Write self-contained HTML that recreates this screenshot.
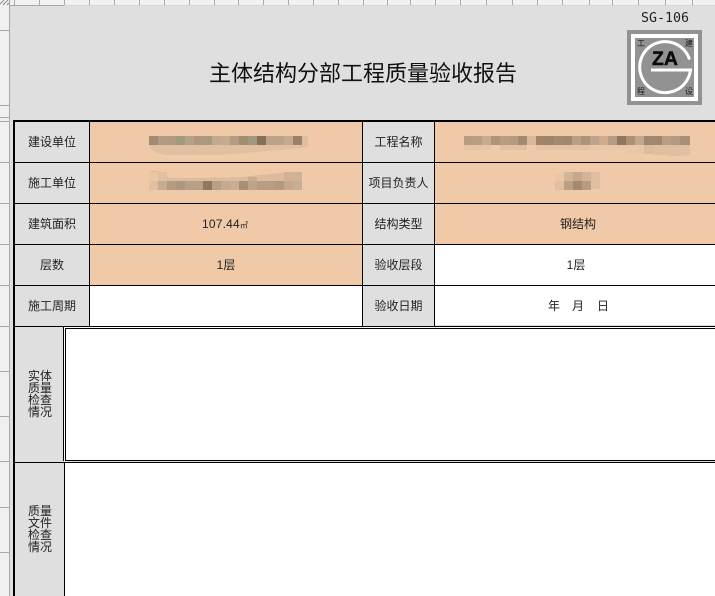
<!DOCTYPE html>
<html lang="zh-CN">
<head>
<meta charset="utf-8">
<title>主体结构分部工程质量验收报告</title>
<style>
html,body{margin:0;padding:0;background:#dfdfdf}
#p{position:relative;width:715px;height:596px;overflow:hidden;background:#dfdfdf;font-family:"Liberation Sans","Noto Sans CJK SC",sans-serif;color:#222}
#p div{position:absolute}
.t{font-size:12px;line-height:16px;text-align:center;white-space:nowrap}
.v{font-size:12px;line-height:12px;width:24px;text-align:center;left:28px}
.c{font-size:8px;line-height:10px;color:#1a1a1a}
svg{position:absolute;left:0;top:0}
</style>
</head>
<body>
<div id="p">
<svg width="715" height="596" viewBox="0 0 715 596" shape-rendering="crispEdges">
<!-- rulers -->
<rect x="0" y="0" width="715" height="5" fill="#f1f1f1"/>
<rect x="0" y="0" width="9" height="596" fill="#f0f0f0"/>
<rect x="9" y="0" width="1" height="596" fill="#a8a8a8"/>
<rect x="9" y="5" width="55" height="1" fill="#a8a8a8"/>
<rect x="64" y="5" width="651" height="1" fill="#d6d6d6"/>
<g fill="#a8a8a8">
<rect x="14" y="0" width="1" height="5"/><rect x="39" y="0" width="1" height="5"/><rect x="64" y="0" width="1" height="5"/><rect x="89" y="0" width="1" height="5"/><rect x="114" y="0" width="1" height="5"/><rect x="139" y="0" width="1" height="5"/><rect x="164" y="0" width="1" height="5"/><rect x="189" y="0" width="1" height="5"/><rect x="214" y="0" width="1" height="5"/><rect x="238" y="0" width="1" height="5"/><rect x="263" y="0" width="1" height="5"/><rect x="288" y="0" width="1" height="5"/><rect x="313" y="0" width="1" height="5"/><rect x="338" y="0" width="1" height="5"/><rect x="363" y="0" width="1" height="5"/><rect x="387" y="0" width="1" height="5"/><rect x="410" y="0" width="1" height="5"/><rect x="435" y="0" width="1" height="5"/><rect x="460" y="0" width="1" height="5"/><rect x="486" y="0" width="1" height="5"/><rect x="512" y="0" width="1" height="5"/><rect x="537" y="0" width="1" height="5"/><rect x="562" y="0" width="1" height="5"/><rect x="589" y="0" width="1" height="5"/><rect x="612" y="0" width="1" height="5"/><rect x="638" y="0" width="1" height="5"/><rect x="665" y="0" width="1" height="5"/><rect x="692" y="0" width="1" height="5"/>
<rect x="0" y="30" width="9" height="1"/><rect x="0" y="105" width="9" height="1"/><rect x="0" y="117" width="9" height="1"/><rect x="0" y="121" width="9" height="1"/><rect x="0" y="162" width="9" height="1"/><rect x="0" y="203" width="9" height="1"/><rect x="0" y="244" width="9" height="1"/><rect x="0" y="285" width="9" height="1"/><rect x="0" y="326" width="9" height="1"/><rect x="0" y="371" width="9" height="1"/><rect x="0" y="416" width="9" height="1"/><rect x="0" y="461" width="9" height="1"/><rect x="0" y="507" width="9" height="1"/><rect x="0" y="552" width="9" height="1"/>
</g>
<path d="M0 4l4-4M3 5l5-5M7 5l2-2" stroke="#8a8a8a" fill="none" shape-rendering="auto"/>

<!-- peach / white fills -->
<g fill="#f0caa8">
<rect x="90" y="122" width="272" height="122"/>
<rect x="90" y="245" width="272" height="40"/>
<rect x="435" y="122" width="280" height="122"/>
</g>
<g fill="#fff">
<rect x="435" y="245" width="280" height="80"/>
<rect x="90" y="286" width="272" height="40"/>
<rect x="64" y="327" width="651" height="134"/>
<rect x="64" y="462" width="651" height="134"/>
</g>

<!-- grid -->
<g fill="#000">
<rect x="13" y="120" width="702" height="2"/>
<rect x="13" y="120" width="2" height="476"/>
<rect x="15" y="162" width="700" height="1"/>
<rect x="15" y="203" width="700" height="1"/>
<rect x="15" y="244" width="700" height="1"/>
<rect x="15" y="285" width="700" height="1"/>
<rect x="15" y="326" width="700" height="1"/>
<rect x="89" y="122" width="1" height="204"/>
<rect x="362" y="122" width="1" height="204"/>
<rect x="434" y="122" width="1" height="204"/>
<rect x="63" y="326" width="1" height="135"/>
<rect x="65" y="328" width="650" height="1"/>
<rect x="65" y="328" width="1" height="133"/>
<rect x="65" y="460" width="650" height="1"/>
<rect x="15" y="462" width="700" height="1"/>
<rect x="64" y="462" width="1" height="134"/>
</g>

<!-- mosaic 1 -->
<path d="M149 145H310L305 148Q260 152 220 155H165Q150 152 149 145Z" fill="#e0c0a0"/>
<g>
<rect x="149" y="136" width="9" height="9" fill="#a48a70"/><rect x="158" y="136" width="9" height="9" fill="#b39c86"/><rect x="167" y="136" width="9" height="9" fill="#b09a80"/><rect x="176" y="136" width="9" height="9" fill="#a09a80"/><rect x="185" y="136" width="9" height="9" fill="#b89f88"/><rect x="194" y="136" width="9" height="9" fill="#b0977c"/><rect x="203" y="136" width="9" height="9" fill="#a89980"/><rect x="212" y="136" width="9" height="9" fill="#c2aa90"/><rect x="221" y="136" width="9" height="9" fill="#c8aa8c"/><rect x="230" y="136" width="9" height="9" fill="#b49c84"/><rect x="239" y="136" width="9" height="9" fill="#a48c72"/><rect x="248" y="136" width="9" height="9" fill="#a09880"/><rect x="257" y="136" width="9" height="9" fill="#86705c"/><rect x="266" y="136" width="9" height="9" fill="#bca288"/><rect x="275" y="136" width="9" height="9" fill="#bca288"/><rect x="284" y="136" width="9" height="9" fill="#c4aa90"/><rect x="293" y="136" width="9" height="9" fill="#9c8068"/><rect x="302" y="136" width="6" height="9" fill="#dcbfa3"/>
</g>
<!-- mosaic 2 -->
<path d="M149 181V172Q152 170 160 172L170 178H200L240 177L290 172H302V181Z" fill="#dcbc9c"/>
<g>
<rect x="149" y="172" width="9" height="9" fill="#ebc6a5"/><rect x="158" y="172" width="9" height="9" fill="#e0c0a0"/><rect x="248" y="177" width="9" height="4" fill="#c8aa8c"/><rect x="284" y="172" width="18" height="9" fill="#d2b294"/>
<rect x="149" y="181" width="9" height="9" fill="#e0c0a0"/><rect x="158" y="181" width="9" height="9" fill="#c4ac92"/><rect x="167" y="181" width="9" height="9" fill="#b49a80"/><rect x="176" y="181" width="9" height="9" fill="#ac9880"/><rect x="185" y="181" width="9" height="9" fill="#b8a088"/><rect x="194" y="181" width="9" height="9" fill="#b8a088"/><rect x="203" y="181" width="9" height="9" fill="#907860"/><rect x="212" y="181" width="9" height="9" fill="#b8a088"/><rect x="221" y="181" width="9" height="9" fill="#c4aa90"/><rect x="230" y="181" width="9" height="9" fill="#c8ae94"/><rect x="239" y="181" width="9" height="9" fill="#a89078"/><rect x="248" y="181" width="9" height="9" fill="#c0a288"/><rect x="257" y="181" width="9" height="9" fill="#b89c84"/><rect x="266" y="181" width="9" height="9" fill="#b89c84"/><rect x="275" y="181" width="9" height="9" fill="#b49880"/><rect x="284" y="181" width="9" height="9" fill="#c4a88e"/><rect x="293" y="181" width="9" height="9" fill="#c8ae94"/>
</g>
<!-- mosaic 3 -->
<path d="M630 150H690V155Q670 157 665 155L640 153Z" fill="#e0bea0"/>
<g>
<rect x="464" y="136" width="9" height="9" fill="#b89c80"/><rect x="473" y="136" width="9" height="9" fill="#b89e84"/><rect x="482" y="136" width="9" height="9" fill="#c8ac90"/><rect x="491" y="136" width="9" height="9" fill="#b09478"/><rect x="500" y="136" width="9" height="9" fill="#bc9c80"/><rect x="509" y="136" width="9" height="9" fill="#b49a80"/><rect x="518" y="136" width="9" height="9" fill="#a08a70"/><rect x="527" y="136" width="9" height="9" fill="#dcb898"/><rect x="536" y="136" width="9" height="9" fill="#a48468"/><rect x="545" y="136" width="9" height="9" fill="#9c8468"/><rect x="554" y="136" width="9" height="9" fill="#a08a70"/><rect x="563" y="136" width="9" height="9" fill="#a08870"/><rect x="572" y="136" width="9" height="9" fill="#bc9e80"/><rect x="581" y="136" width="9" height="9" fill="#a89478"/><rect x="590" y="136" width="9" height="9" fill="#bca48c"/><rect x="599" y="136" width="9" height="9" fill="#d0ac8c"/><rect x="608" y="136" width="9" height="9" fill="#b49c84"/><rect x="617" y="136" width="9" height="9" fill="#907860"/><rect x="626" y="136" width="9" height="9" fill="#b09074"/><rect x="635" y="136" width="9" height="9" fill="#c0a88c"/><rect x="644" y="136" width="9" height="9" fill="#a08870"/><rect x="653" y="136" width="9" height="9" fill="#a08870"/><rect x="662" y="136" width="9" height="9" fill="#bc9e84"/><rect x="671" y="136" width="9" height="9" fill="#b49a80"/><rect x="680" y="136" width="10" height="9" fill="#a89078"/>
<rect x="464" y="145" width="27" height="5" fill="#e4c4a4"/><rect x="500" y="145" width="27" height="5" fill="#e0c0a0"/><rect x="536" y="145" width="54" height="5" fill="#e4c2a2"/><rect x="590" y="145" width="36" height="5" fill="#e8c6a6"/><rect x="626" y="145" width="18" height="9" fill="#e8c6a6"/><rect x="644" y="145" width="9" height="9" fill="#dcbc9c"/><rect x="653" y="145" width="27" height="10" fill="#e0bea0"/><rect x="680" y="145" width="10" height="9" fill="#e0c0a0"/>
</g>
<!-- mosaic 4 -->
<g>
<rect x="555" y="174" width="9" height="7" fill="#ebc6a5"/><rect x="564" y="172" width="9" height="9" fill="#d4b496"/><rect x="573" y="172" width="9" height="9" fill="#c8a88a"/><rect x="582" y="172" width="9" height="9" fill="#d4b496"/><rect x="591" y="172" width="9" height="9" fill="#dfbfa0"/>
<rect x="555" y="181" width="9" height="9" fill="#e0c0a0"/><rect x="564" y="181" width="9" height="9" fill="#bca084"/><rect x="573" y="181" width="9" height="9" fill="#a48a70"/><rect x="582" y="181" width="9" height="9" fill="#b89c80"/><rect x="591" y="181" width="9" height="8" fill="#dfbfa0"/>
</g>

<!-- logo -->
<rect x="627" y="30" width="75" height="75" fill="#929292"/>
<rect x="631" y="34" width="67" height="67" fill="#fff"/>
<rect x="635" y="38" width="59" height="59" fill="#929292"/>
<g shape-rendering="auto" fill="none" stroke="#fff" stroke-width="3">
<path d="M689.5 59.5A25.5 25.5 0 1 0 690.5 70H651"/>
</g>
</svg>

<div class="t" style="left:641px;top:11px;width:48px;font-family:'DejaVu Sans Mono',monospace;font-size:13.3px;color:#222">SG-106</div>
<div style="left:650px;top:48px;width:30px;text-align:center;font:bold 19.5px/22px 'Liberation Sans',sans-serif;color:#0a0a0a;-webkit-text-stroke:.4px #0a0a0a">ZA</div>
<div class="c" style="left:637px;top:39px">工</div>
<div class="c" style="left:685px;top:39px">建</div>
<div class="c" style="left:637px;top:87px">程</div>
<div class="c" style="left:685px;top:87px">设</div>

<div style="left:209px;top:59px;width:310px;font-size:22px;line-height:30px;white-space:nowrap;color:#111">主体结构分部工程质量验收报告</div>

<div class="t" style="left:15px;top:134px;width:74px">建设单位</div>
<div class="t" style="left:15px;top:175px;width:74px">施工单位</div>
<div class="t" style="left:15px;top:216px;width:74px">建筑面积</div>
<div class="t" style="left:15px;top:257px;width:74px">层数</div>
<div class="t" style="left:15px;top:298px;width:74px">施工周期</div>

<div class="t" style="left:363px;top:134px;width:71px">工程名称</div>
<div class="t" style="left:363px;top:175px;width:71px">项目负责人</div>
<div class="t" style="left:363px;top:216px;width:71px">结构类型</div>
<div class="t" style="left:363px;top:257px;width:71px">验收层段</div>
<div class="t" style="left:363px;top:298px;width:71px">验收日期</div>

<div class="t" style="left:202px;top:216px;width:50px;text-align:left;letter-spacing:.2px">107.44<span style="font-size:8px">㎡</span></div>
<div class="t" style="left:90px;top:257px;width:272px">1层</div>
<div class="t" style="left:441px;top:216px;width:274px">钢结构</div>
<div class="t" style="left:437px;top:257px;width:278px">1层</div>
<div class="t" style="left:548px;top:298px">年</div>
<div class="t" style="left:572px;top:298px">月</div>
<div class="t" style="left:597px;top:298px">日</div>

<div class="v" style="top:370px">实体<br>质量<br>检查<br>情况</div>
<div class="v" style="top:505px">质量<br>文件<br>检查<br>情况</div>
</div>
</body>
</html>
